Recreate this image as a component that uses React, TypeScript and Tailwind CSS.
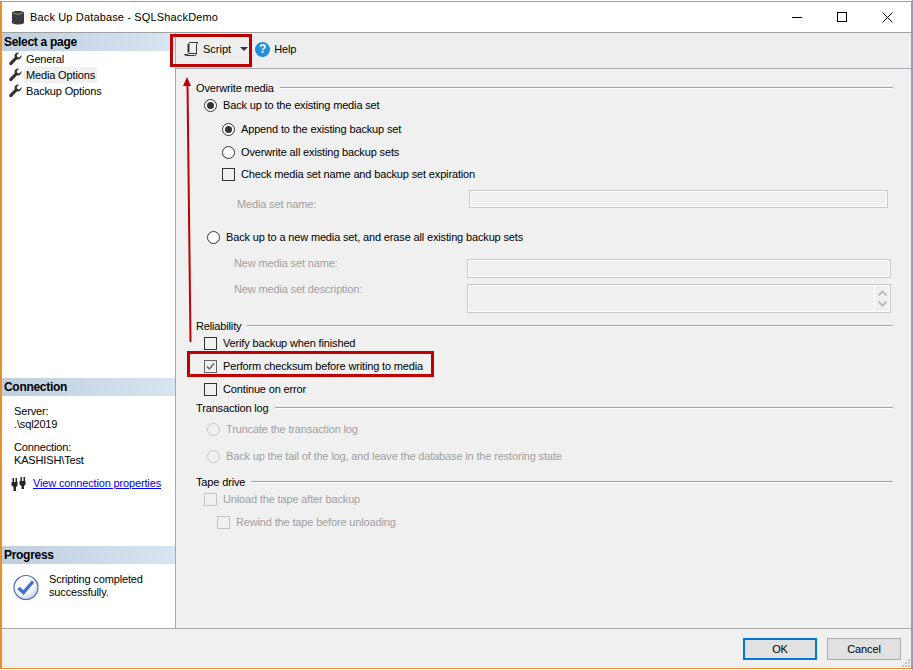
import type { ReactNode } from 'react'

const disabled = 'text-[#a0a0a0]'

function Wrench() {
  return (
    <svg width="14" height="14" viewBox="0 0 14 14" className="shrink-0">
      <path d="M13.500 3c.4 2-.8 4-2.700 4.500-.7.2-1.400.1-2-.1L4.200 12.600c-.7.8-1.800.8-2.500.1-.7-.7-.7-1.700 0-2.400l5-5c-.3-.7-.3-1.500-.1-2.300C7.200 1 9.200 0 11.200.6L8.800 3l.5 2 2 .5z" fill="#333333" />
    </svg>
  )
}

function NavItem({ label, active }: { label: string; active?: boolean }) {
  return (
    <div className="flex h-4 items-center pl-[6px]">
      <Wrench />
      <span className={`ml-[2px] flex h-4 items-center px-[2px] ${active ? 'bg-[#f0f0f0]' : ''}`}>{label}</span>
    </div>
  )
}

function PaneHeader({ label }: { label: string }) {
  return (
    <div className="flex h-[18px] items-center bg-gradient-to-r from-[#bfcfdf] to-[#d7e5f2] pl-[2px] text-[12px] font-bold tracking-[-0.3px] text-black">
      {label}
    </div>
  )
}

function Radio({ checked, off }: { checked?: boolean; off?: boolean }) {
  return (
    <span className={`flex h-[13px] w-[13px] shrink-0 items-center justify-center rounded-full border ${off ? 'border-[#c4c4c4]' : 'border-[#333] bg-white'}`}>
      {checked && <span className="h-[7px] w-[7px] rounded-full bg-[#333]" />}
    </span>
  )
}

function Check({ checked, off }: { checked?: boolean; off?: boolean }) {
  return (
    <span className={`flex h-[13px] w-[13px] shrink-0 items-center justify-center border ${off ? 'border-[#c4c4c4]' : checked ? 'border-[#666]' : 'border-[#333]'}`}>
      {checked && (
        <svg width="11" height="11" viewBox="0 0 11 11">
          <path d="M2 5.500l2.500 2.500L9 2.500" fill="none" stroke="#666" strokeWidth="1.500" />
        </svg>
      )}
    </span>
  )
}

function Row({ className, control, label, off }: { className: string; control: ReactNode; label: string; off?: boolean }) {
  return (
    <div className={`flex items-center gap-[6px] ${className} ${off ? disabled : ''}`}>
      {control}
      <span>{label}</span>
    </div>
  )
}

function Section({ className, title }: { className: string; title: string }) {
  return (
    <div className={`flex h-4 items-center gap-[6px] pl-5 pr-[18px] ${className}`}>
      <span>{title}</span>
      <span className="h-[2px] flex-1 border-t border-[#a0a0a0] bg-white" />
    </div>
  )
}

function DisabledInput({ className, children }: { className: string; children?: ReactNode }) {
  return <div className={`border border-[#c8c8c8] shadow-[inset_0_0_0_1px_#ffffff] ${className}`}>{children}</div>
}

export default function App() {
  return (
    <div className="relative h-[670px] w-[913px] overflow-hidden bg-white font-['Liberation_Sans',sans-serif] text-[11px] leading-none tracking-[-0.15px] text-black">
      <div className="mt-[1px] mr-[1px] flex h-[668px] flex-col border-t border-r border-b border-l-2 border-[#e8912a] bg-[#f0f0f0]">
        {/* title bar */}
        <div className="flex h-[31px] shrink-0 items-center border-b border-[#a0a0a0] bg-white">
          <svg width="14" height="15" viewBox="0 0 14 15" className="ml-[9px]">
            <path d="M1 3c0-2.600 12-2.600 12 0v9.500c0 2.600-12 2.600-12 0z" fill="#3c3c3c" />
            <path d="M2.500 3.200c1.500 1.200 7.500 1.200 9 0" fill="none" stroke="#9a9a9a" />
          </svg>
          <span className="ml-[5px] tracking-[0.15px]">Back Up Database - SQLShackDemo</span>
          <div className="ml-auto flex items-center pr-[18px]">
            <span className="h-[1px] w-[10px] bg-black" />
            <span className="ml-[35px] h-[10px] w-[10px] border border-black" />
            <svg width="11" height="11" viewBox="0 0 11 11" className="ml-[35px]">
              <path d="M.5.5l10 10M10.500.5l-10 10" stroke="#000" />
            </svg>
          </div>
        </div>

        <div className="flex h-[596px] shrink-0 border-b border-[#a8a8a8]">
          {/* left pane */}
          <div className="flex w-[174px] shrink-0 flex-col border-r border-[#a8a8a8] bg-white">
            <PaneHeader label="Select a page" />
            <div>
              <NavItem label="General" />
              <NavItem label="Media Options" active />
              <NavItem label="Backup Options" />
            </div>
            <div className="mt-[279px]">
              <PaneHeader label="Connection" />
            </div>
            <div className="pl-[12px] pt-[9px] leading-[13px]">
              <div>Server:</div>
              <div>.\sql2019</div>
              <div className="mt-[10px]">Connection:</div>
              <div>KASHISH\Test</div>
            </div>
            <div className="mt-[10px] flex h-[13px] items-center pl-[9px]">
              <svg width="15" height="14" viewBox="0 0 15 14">
                <path d="M.5 5h6v3.500L5 10v4H2.500v-4L.5 8.500zM1.500 1h1.500v4H1.500zM4.500 1h1.500v4H4.500zM8.500 4h6v3.500L13 9v3h-2.500V9L8.500 7.500zM9.500 0H11v4H9.500zM12.500 0H14v4h-1.500z" fill="#262626" />
              </svg>
              <a className="ml-[7px] text-[#0000ee] underline">View connection properties</a>
            </div>
            <div className="mt-[56px]">
              <PaneHeader label="Progress" />
            </div>
            <div className="flex pl-[11px] pt-[10px]">
              <svg width="26" height="27" viewBox="0 0 26 27">
                <defs>
                  <radialGradient id="ball" cx="0.4" cy="0.35" r="0.75">
                    <stop offset="0.5" stopColor="#ffffff" />
                    <stop offset="1" stopColor="#b9c9e6" />
                  </radialGradient>
                </defs>
                <circle cx="13" cy="13.500" r="12" fill="url(#ball)" stroke="#4a6fb5" strokeWidth="1.200" />
                <path d="M5.500 14l5 4.500 9.500-11" fill="none" stroke="#3f6fd6" strokeWidth="3.400" />
              </svg>
              <div className="ml-[10px] -mt-[1px] leading-[13px]">
                <div>Scripting completed</div>
                <div>successfully.</div>
              </div>
            </div>
          </div>

          {/* right side */}
          <div className="flex min-w-0 flex-1 flex-col">
            <div className="flex h-[36px] shrink-0 items-center border-b border-[#a8abb0] bg-[#eeeeee] pb-[3px] pl-[8px]">
              <svg width="15" height="14" viewBox="0 0 15 14">
                <path d="M4.500 2.500c0-1 .5-2 1.500-2h8c-1 .5-1.500 1.500-1.500 2.500v8" fill="none" stroke="#333" />
                <path d="M4.500 2v8.500" fill="none" stroke="#333" strokeWidth="2" />
                <path d="M.5 12.500c.5 1 1 1 2 1h8c1 0 2-.5 2-2h-8c0 1-.5 1-1 1z" fill="none" stroke="#333" />
              </svg>
              <span className="ml-[4px] tracking-[0px]">Script</span>
              <svg width="8" height="4" viewBox="0 0 8 4" className="ml-[9px]">
                <path d="M0 0h8L4 4z" fill="#333" />
              </svg>
              <span className="ml-[7px] flex h-[15px] w-[15px] items-center justify-center rounded-full bg-[#1f8fe0] text-[12px] font-bold text-white">?</span>
              <span className="ml-[4px]">Help</span>
            </div>

            <div className="flex flex-1 flex-col pt-[11px]">
              <Section className="" title="Overwrite media" />
              <Row className="h-[18px] pl-7" control={<Radio checked />} label="Back up to the existing media set" />
              <Row className="mt-1 h-[22px] pl-[46px]" control={<Radio checked />} label="Append to the existing backup set" />
              <Row className="mt-[2px] h-[20px] pl-[46px]" control={<Radio />} label="Overwrite all existing backup sets" />
              <Row className="mt-[1px] h-[22px] pl-[46px]" control={<Check />} label="Check media set name and backup set expiration" />
              <div className={`mt-[5px] flex h-[18px] pl-[61px] pr-[23px] ${disabled}`}>
                <span className="w-[232px] pt-[9px]">Media set name:</span>
                <DisabledInput className="flex-1" />
              </div>
              <Row className="mt-5 h-[18px] pl-[31px]" control={<Radio />} label="Back up to a new media set, and erase all existing backup sets" />
              <div className={`mt-[13px] flex h-[19px] pl-[58px] pr-[20px] ${disabled}`}>
                <span className="-mt-[1px] w-[233px]">New media set name:</span>
                <DisabledInput className="flex-1" />
              </div>
              <div className={`mt-[6px] flex h-[29px] pl-[58px] pr-[20px] ${disabled}`}>
                <span className="w-[233px]">New media set description:</span>
                <DisabledInput className="flex flex-1 justify-end">
                  <div className="flex w-[16px] flex-col items-center justify-center gap-[5px] border-l border-white">
                    <svg width="9" height="6" viewBox="0 0 9 6"><path d="M.5 5.500l4-4 4 4" fill="none" stroke="#bdbdbd" strokeWidth="2" /></svg>
                    <svg width="9" height="6" viewBox="0 0 9 6"><path d="M.5.5l4 4 4-4" fill="none" stroke="#bdbdbd" strokeWidth="2" /></svg>
                  </div>
                </DisabledInput>
              </div>
              <Section className="mt-[5px]" title="Reliability" />
              <Row className="h-[18px] pl-7" control={<Check />} label="Verify backup when finished" />
              <Row className="mt-[5px] h-[18px] pl-7" control={<Check checked />} label="Perform checksum before writing to media" />
              <Row className="mt-[5px] h-[18px] pl-7" control={<Check />} label="Continue on error" />
              <Section className="mt-[2px]" title="Transaction log" />
              <Row className="mt-1 h-[18px] pl-[31px]" off control={<Radio off />} label="Truncate the transaction log" />
              <Row className="mt-[9px] h-[18px] pl-[31px]" off control={<Radio off />} label="Back up the tail of the log, and leave the database in the restoring state" />
              <Section className="mt-[9px]" title="Tape drive" />
              <Row className="h-[18px] pl-7" off control={<Check off />} label="Unload the tape after backup" />
              <Row className="mt-[5px] h-[18px] pl-[41px]" off control={<Check off />} label="Rewind the tape before unloading" />
            </div>
          </div>
        </div>

        {/* footer */}
        <div className="relative flex flex-1 items-start justify-end gap-[10px] pr-[10px] pt-[9px]">
          <button className="h-[22px] w-[74px] border-2 border-[#0078d7] bg-[#e1e1e1]">OK</button>
          <button className="h-[22px] w-[74px] border border-[#adadad] bg-[#e1e1e1]">Cancel</button>
          <svg width="10" height="10" viewBox="0 0 10 10" className="absolute bottom-0 right-0">
            <path d="M7 1h2v2H7zM4 4h2v2H4zM7 4h2v2H7zM1 7h2v2H1zM4 7h2v2H4zM7 7h2v2H7z" fill="#c4c4c4" />
          </svg>
        </div>
      </div>

      {/* blue desktop edge to the right of the window */}
      <div className="absolute right-0 top-0 h-full w-[1px] bg-[#7fa6d8]" />

      {/* red annotations */}
      <div className="absolute left-[170px] top-[34px] h-[33px] w-[82px] border-[3px] border-[#c00000]" />
      <div className="absolute left-[187px] top-[351px] h-[26px] w-[247px] border-[3px] border-[#c00000]" />
      <svg width="12" height="270" viewBox="0 0 12 270" className="absolute left-[181px] top-[76px]">
        <path d="M9.500 266L6.500 8" stroke="#c00000" strokeWidth="2" fill="none" />
        <path d="M6 1l-4 9h8z" fill="#c00000" />
      </svg>
    </div>
  )
}
